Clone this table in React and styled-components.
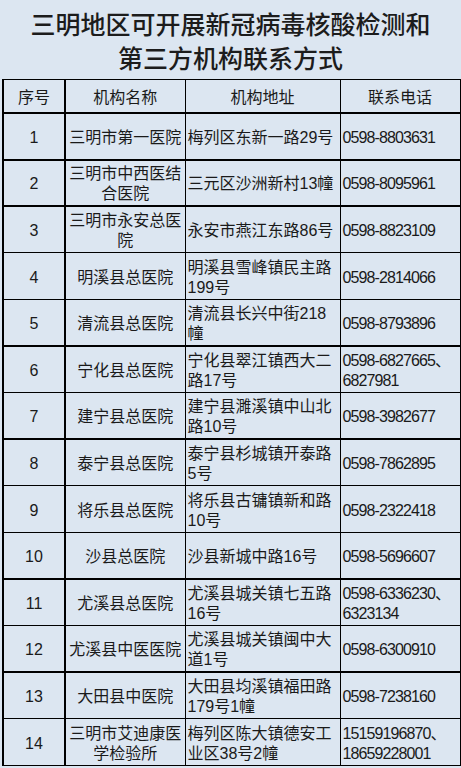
import React from "react";
import styled, { createGlobalStyle } from "styled-components";

const GlobalStyle = createGlobalStyle`
  html, body {
    margin: 0;
    padding: 0;
    background: #dce6f1;
  }
  body {
    font-family: "Liberation Sans", "Noto Sans CJK SC", sans-serif;
    color: #1a1a1a;
  }
`;

const Page = styled.div`
  width: 461px;
  height: 768px;
  background: #dce6f1;
  overflow: hidden;
`;

const Title = styled.h1`
  margin: 0;
  padding: 8px 0 3px;
  font-size: 25px;
  line-height: 34px;
  font-weight: 500;
  text-align: center;
  color: #1c1c1c;
  white-space: nowrap;
`;

const Table = styled.table`
  margin-left: 2px;
  width: 457px;
  border-collapse: collapse;
  table-layout: fixed;
  font-size: 16px;
`;

const Th = styled.th`
  height: 29px;
  padding: 3px 0 0;
  font-weight: 400;
  text-align: center;
  border: 1px solid #000;
  border-bottom: 2px solid #000;
  border-left-width: ${(p) => (p.$first ? "2px" : "1px")};
  border-right-width: ${(p) => (p.$first ? "2px" : "1px")};
  line-height: 20px;
`;

const Row = styled.tr`
  height: 46.6px;
`;

const Td = styled.td`
  padding: 3px ${(p) => (p.$align === "left" ? "2px" : "0")} 0;
  border: 1px solid #000;
  border-top-width: ${(p) => (p.$heavy ? "2px" : "1px")};
  border-left-width: ${(p) => (p.$first ? "2px" : "1px")};
  border-right-width: ${(p) => (p.$first ? "2px" : "1px")};
  text-align: ${(p) => p.$align || "center"};
  vertical-align: middle;
  line-height: 20px;
  white-space: nowrap;
  letter-spacing: ${(p) => (p.$phone ? "-0.9px" : "0")};
`;

const Line = styled.span`
  display: block;
`;

const rows = [
  ["1", ["三明市第一医院"], ["梅列区东新一路29号"], ["0598-8803631"]],
  ["2", ["三明市中西医结", "合医院"], ["三元区沙洲新村13幢"], ["0598-8095961"], true],
  ["3", ["三明市永安总医", "院"], ["永安市燕江东路86号"], ["0598-8823109"], true],
  ["4", ["明溪县总医院"], ["明溪县雪峰镇民主路", "199号"], ["0598-2814066"]],
  ["5", ["清流县总医院"], ["清流县长兴中街218", "幢"], ["0598-8793896"]],
  ["6", ["宁化县总医院"], ["宁化县翠江镇西大二", "路17号"], ["0598-6827665、", "6827981"], true],
  ["7", ["建宁县总医院"], ["建宁县濉溪镇中山北", "路10号"], ["0598-3982677"]],
  ["8", ["泰宁县总医院"], ["泰宁县杉城镇开泰路", "5号"], ["0598-7862895"], true],
  ["9", ["将乐县总医院"], ["将乐县古镛镇新和路", "10号"], ["0598-2322418"]],
  ["10", ["沙县总医院"], ["沙县新城中路16号"], ["0598-5696607"]],
  ["11", ["尤溪县总医院"], ["尤溪县城关镇七五路", "16号"], ["0598-6336230、", "6323134"], true],
  ["12", ["尤溪县中医医院"], ["尤溪县城关镇闽中大", "道1号"], ["0598-6300910"]],
  ["13", ["大田县中医院"], ["大田县均溪镇福田路", "179号1幢"], ["0598-7238160"], true],
  ["14", ["三明市艾迪康医", "学检验所"], ["梅列区陈大镇德安工", "业区38号2幢"], ["15159196870、", "18659228001"]],
];

function Lines({ items }) {
  return items.map((t, i) => <Line key={i}>{t}</Line>);
}

export default function App() {
  return (
    <Page>
      <GlobalStyle />
      <Title>
        三明地区可开展新冠病毒核酸检测和
        <br />
        第三方机构联系方式
      </Title>
      <Table>
        <colgroup>
          <col style={{ width: 62 }} />
          <col style={{ width: 120 }} />
          <col style={{ width: 155 }} />
          <col style={{ width: 120 }} />
        </colgroup>
        <thead>
          <tr>
            <Th $first>序号</Th>
            <Th>机构名称</Th>
            <Th>机构地址</Th>
            <Th>联系电话</Th>
          </tr>
        </thead>
        <tbody>
          {rows.map(([no, name, addr, phone, heavy]) => (
            <Row key={no}>
              <Td $first $heavy={heavy}>{no}</Td>
              <Td $heavy={heavy}>
                <Lines items={name} />
              </Td>
              <Td $heavy={heavy} $align="left">
                <Lines items={addr} />
              </Td>
              <Td $heavy={heavy} $align="left" $phone>
                <Lines items={phone} />
              </Td>
            </Row>
          ))}
        </tbody>
      </Table>
    </Page>
  );
}
